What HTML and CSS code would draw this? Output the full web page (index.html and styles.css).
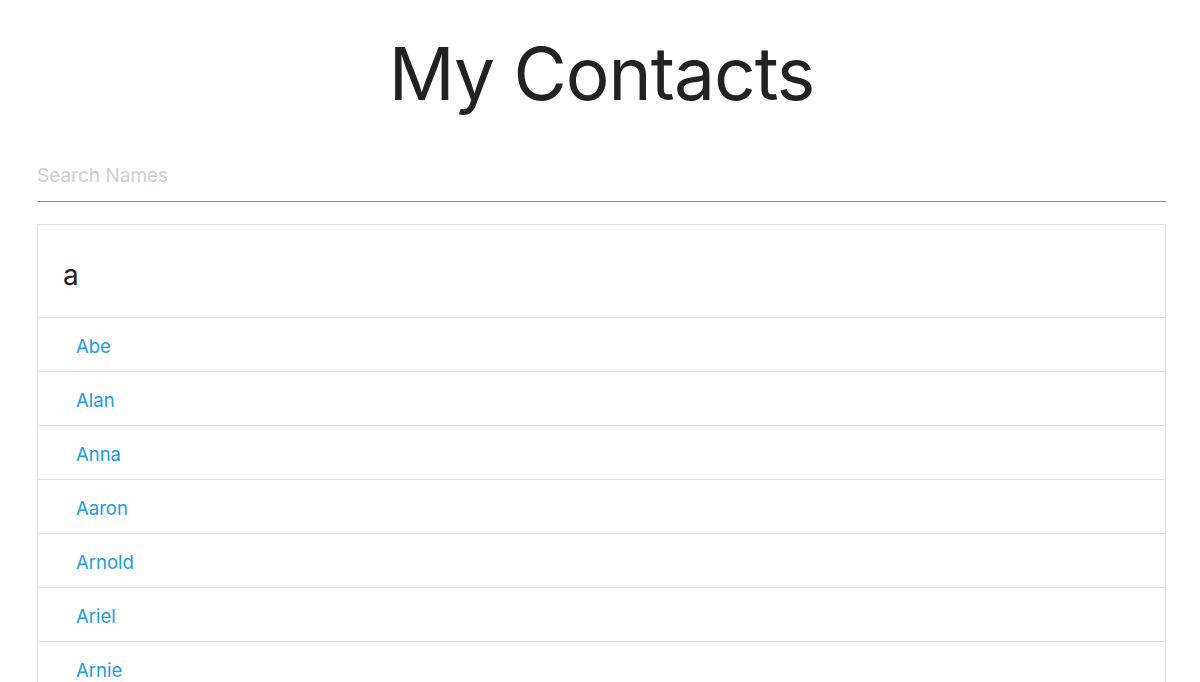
FILE: index.html
```html
<!DOCTYPE html>
<html>
<head>
<meta charset="utf-8">
<link rel="stylesheet" href="styles.css">
</head>
<body>
<div class="app">
  <h1 class="title">My Contacts</h1>
  <input class="search" type="text" placeholder="Search Names">
  <div class="panel">
    <div class="group-head">a</div>
    <ul class="list">
      <li class="item"><a href="#">Abe</a></li>
      <li class="item"><a href="#">Alan</a></li>
      <li class="item"><a href="#">Anna</a></li>
      <li class="item"><a href="#">Aaron</a></li>
      <li class="item"><a href="#">Arnold</a></li>
      <li class="item"><a href="#">Ariel</a></li>
      <li class="item"><a href="#">Arnie</a></li>
      <li class="item"><a href="#">Amy</a></li>
    </ul>
  </div>
</div>
</body>
</html>
```

FILE: styles.css
```css
html, body {
  margin: 0;
  padding: 0;
  background: #fff;
}
body {
  font-family: Inter, "Noto Sans", sans-serif;
  color: #222;
  overflow: hidden;
}
.app {
  margin: 0 34px 0 37px;
  display: flex;
  flex-direction: column;
}
.title {
  margin: 26px 0 0;
  font-size: 73px;
  font-weight: 400;
  line-height: 96px;
  text-align: center;
  color: #222;
  letter-spacing: -1px;
}
.search {
  box-sizing: border-box;
  width: 100%;
  height: 80px;
  margin: 0;
  padding: 27px 0 0;
  border: none;
  border-bottom: 1px solid #8a8a8a;
  font-family: inherit;
  font-size: 19px;
  color: #222;
  outline: none;
  background: transparent;
}
.search::placeholder {
  color: #cfcfcf;
}
.panel {
  margin-top: 22px;
  border: 1px solid #e2e2e2;
  border-bottom: none;
}
.group-head {
  height: 92px;
  box-sizing: border-box;
  padding-left: 25px;
  padding-top: 8px;
  display: flex;
  align-items: center;
  font-size: 28px;
  color: #222;
}
.list {
  list-style: none;
  margin: 0;
  padding: 0;
}
.item {
  border-top: 1px solid #e2e2e2;
  height: 54px;
  box-sizing: border-box;
  padding-top: 2px;
  display: flex;
  align-items: center;
  padding-left: 38px;
}
.item a {
  color: #1a9be3;
  text-decoration: none;
  font-size: 18.5px;
}
```
